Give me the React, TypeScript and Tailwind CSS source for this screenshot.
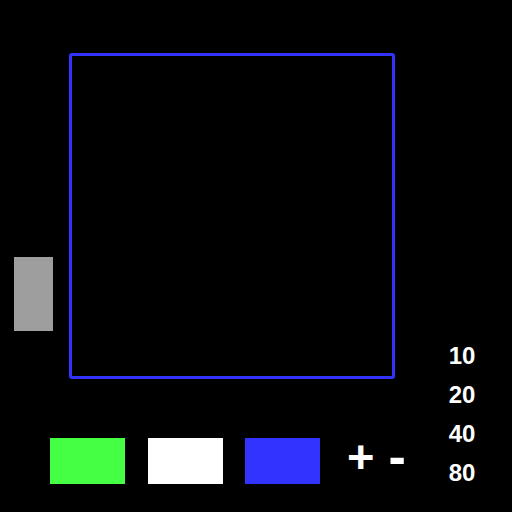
export default function App() {
  const sizes = [10, 20, 40, 80];
  return (
    <div className="w-[512px] h-[512px] bg-black flex font-['Liberation_Sans',Arial,sans-serif] text-white">
      {/* canvas + palette */}
      <div className="w-[412px] flex flex-col pt-[53px]">
        <div className="flex items-start">
          <div className="ml-[14px] mt-[204px] w-[39px] h-[74px] bg-[#9e9e9e]" />
          <div className="ml-[16px] w-[326px] h-[326px] border-[3px] border-[#3333ff] rounded-[3px]" />
        </div>
        <div className="flex items-center h-[46px] mt-[59px] pl-[50px]">
          <div className="w-[75px] h-[46px] bg-[#44ff44]" />
          <div className="ml-[23px] w-[75px] h-[46px] bg-white" />
          <div className="ml-[22px] w-[75px] h-[46px] bg-[#3333ff]" />
          <span className="ml-[27px] mb-[9px] text-[47px] font-bold leading-none">+</span>
          <span className="ml-[14px] mb-[10px] text-[52px] font-bold leading-none">-</span>
        </div>
      </div>
      {/* brush sizes */}
      <div className="flex-1 flex flex-col justify-end items-center pb-[20px] text-[24px] font-bold leading-[39px]">
        {sizes.map((s) => (
          <div key={s}>{s}</div>
        ))}
      </div>
    </div>
  );
}
